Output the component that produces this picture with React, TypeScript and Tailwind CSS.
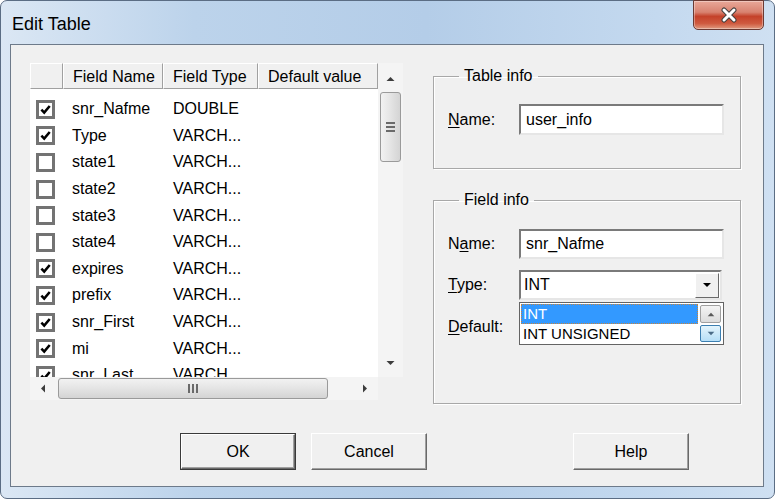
import React from "react";

type Row = { name: string; type: string; on: boolean };

const rows: Row[] = [
  { name: "snr_Nafme", type: "DOUBLE", on: true },
  { name: "Type", type: "VARCH...", on: true },
  { name: "state1", type: "VARCH...", on: false },
  { name: "state2", type: "VARCH...", on: false },
  { name: "state3", type: "VARCH...", on: false },
  { name: "state4", type: "VARCH...", on: false },
  { name: "expires", type: "VARCH...", on: true },
  { name: "prefix", type: "VARCH...", on: true },
  { name: "snr_First", type: "VARCH...", on: true },
  { name: "mi", type: "VARCH...", on: true },
  { name: "snr_Last", type: "VARCH...", on: true },
  { name: "suffix", type: "VARCH...", on: true },
];

type Dir = "up" | "down" | "left" | "right";

function Tri({ dir, className }: { dir: Dir; className?: string }) {
  const pts = { up: "0,5 4,1 8,5", down: "0,1 8,1 4,5", left: "5,0 5,8 1,4", right: "1,0 1,8 5,4" }[dir];
  const vb = dir === "up" || dir === "down" ? "0 0 8 6" : "0 0 6 8";
  return (
    <svg viewBox={vb} className={className}>
      <polygon points={pts} fill="currentColor" />
    </svg>
  );
}

function Check({ on }: { on: boolean }) {
  return (
    <span className="flex h-[19px] w-[19px] items-center justify-center border-[3px] border-[#737373] bg-white">
      {on && (
        <svg viewBox="0 0 12 12" className="h-[11px] w-[11px]">
          <path d="M1.5 6.2 L4.6 9.4 L10.6 2.2" fill="none" stroke="#000" strokeWidth="2.8" />
        </svg>
      )}
    </span>
  );
}

function HeadCell({ w, label }: { w: string; label?: string }) {
  return (
    <div
      className={`${w} flex items-center border-t border-l border-t-white border-l-white border-r border-b border-r-[#a0a0a0] border-b-[#a0a0a0] pl-[9px] pt-px`}
    >
      {label}
    </div>
  );
}

function VScroll() {
  return (
    <div className="flex w-[25px] flex-col bg-[#f4f4f4]">
      <div className="flex h-[29px] items-center justify-center pt-[2px] text-[#3c3c3c]">
        <Tri dir="up" className="h-[6px] w-[9px]" />
      </div>
      <div className="mx-[2px] flex h-[70px] items-center justify-center rounded-[3px] border border-[#9a9a9a] bg-[linear-gradient(90deg,#f2f2f2,#e4e4e4_50%,#d4d4d4)]">
        <div className="flex flex-col gap-[2px]">
          <span className="h-[2px] w-[9px] bg-[#6a6a6a]" />
          <span className="h-[2px] w-[9px] bg-[#6a6a6a]" />
          <span className="h-[2px] w-[9px] bg-[#6a6a6a]" />
        </div>
      </div>
      <div className="flex-1" />
      <div className="flex h-[27px] items-center justify-center pb-[2px] text-[#3c3c3c]">
        <Tri dir="down" className="h-[6px] w-[9px]" />
      </div>
    </div>
  );
}

function HScroll() {
  return (
    <div className="flex w-[348px] items-center bg-[#f4f4f4]">
      <div className="flex w-[26px] items-center justify-center text-[#3c3c3c]">
        <Tri dir="left" className="h-[9px] w-[6px]" />
      </div>
      <div className="ml-[2px] flex h-[21px] w-[270px] items-center justify-center rounded-[3px] border border-[#9a9a9a] bg-[linear-gradient(180deg,#f2f2f2,#e4e4e4_50%,#d4d4d4)]">
        <div className="flex gap-[2px]">
          <span className="h-[9px] w-[2px] bg-[#6a6a6a]" />
          <span className="h-[9px] w-[2px] bg-[#6a6a6a]" />
          <span className="h-[9px] w-[2px] bg-[#6a6a6a]" />
        </div>
      </div>
      <div className="flex-1" />
      <div className="flex w-[26px] items-center justify-center text-[#3c3c3c]">
        <Tri dir="right" className="h-[9px] w-[6px]" />
      </div>
    </div>
  );
}

function FieldList() {
  return (
    <div className="flex h-[337px] w-[373px] flex-col bg-white text-[16px]">
      <div className="flex h-[314px]">
        <div className="flex w-[348px] flex-col">
          <div className="flex h-[26px] shrink-0 bg-[#f0f0f0]">
            <HeadCell w="w-[33px]" />
            <HeadCell w="w-[100px]" label="Field Name" />
            <HeadCell w="w-[95px]" label="Field Type" />
            <HeadCell w="w-[120px]" label="Default value" />
          </div>
          <div className="flex-1 overflow-hidden pt-[7px]">
            {rows.map((r) => (
              <div key={r.name} className="flex h-[26.6px] items-center">
                <div className="w-[33px] pl-[6px]">
                  <Check on={r.on} />
                </div>
                <div className="w-[100px] pl-[9px]">{r.name}</div>
                <div className="w-[95px] pl-[10px]">{r.type}</div>
              </div>
            ))}
          </div>
        </div>
        <VScroll />
      </div>
      <div className="flex h-[23px]">
        <HScroll />
        <div className="flex-1 bg-[#f0f0f0]" />
      </div>
    </div>
  );
}

const sunken =
  "border-2 border-t-[#7a7a7a] border-l-[#7a7a7a] border-r-[#e6e6e6] border-b-[#e6e6e6] bg-white";

function Label({ pre, u, post }: { pre?: string; u: string; post: string }) {
  return (
    <span className="w-[71px] shrink-0">
      {pre}
      <span className="underline underline-offset-2">{u}</span>
      {post}
    </span>
  );
}

function Btn({ label, def }: { label: string; def?: boolean }) {
  return (
    <button
      className={`h-[37px] w-[116px] bg-[#f0f0f0] text-[16px] ${def ? "border border-[#3a3a3a]" : ""}`}
    >
      <span className="flex h-full w-full items-center justify-center border border-t-white border-l-white border-r-[#696969] border-b-[#696969] pt-px shadow-[inset_-1px_-1px_0_#a0a0a0]">
        {label}
      </span>
    </button>
  );
}

export default function App() {
  return (
    <div className="h-[499px] w-[775px] overflow-hidden bg-white font-['Liberation_Sans',Arial,sans-serif] text-black">
      <div className="flex h-full flex-col rounded-[7px] border border-[#5b6d84] bg-[linear-gradient(90deg,#dbe7f4_0%,#bcd3eb_25%,#b4cde8_55%,#c4d9ef_85%,#cfe0f2_100%)]">
        <div className="flex h-[43px] items-start justify-between">
          <span className="pl-[11px] pt-[10px] text-[18px]">Edit Table</span>
          <button className="-mt-px mr-[10px] flex h-[30px] w-[71px] items-center justify-center rounded-b-[5px] border border-[#6b3a33] bg-[linear-gradient(180deg,#e9a899_0%,#d88270_40%,#c4412a_55%,#cf5a3f_80%,#e09a80_100%)] shadow-[inset_0_0_0_1px_rgba(255,255,255,0.35)]">
            <svg viewBox="0 0 20 16" className="h-[16px] w-[20px]">
              <path d="M5 3 L15 13 M15 3 L5 13" stroke="#44403f" strokeWidth="5" strokeLinecap="round" />
              <path d="M5 3 L15 13 M15 3 L5 13" stroke="#fff" strokeWidth="3" strokeLinecap="round" />
            </svg>
          </button>
        </div>

        <div className="ml-[9px] mr-[10px] h-[443px] border border-[#6d7a8a] bg-[#f0f0f0] text-[16px]">
          <div className="flex gap-[30px] pl-[19px] pt-[18px]">
            <FieldList />

            <div className="flex w-[308px] flex-col pt-[3px]">
              <fieldset className="h-[103px] border border-[#a8a8a8] px-[14px] pt-[18px] shadow-[inset_1px_1px_0_#fff,1px_1px_0_#fff]">
                <legend className="ml-[11px] px-[5px] leading-[20px]">Table info</legend>
                <div className="flex items-center">
                  <Label u="N" post="ame:" />
                  <div className={`${sunken} flex h-[31px] w-[205px] items-center pl-[5px]`}>user_info</div>
                </div>
              </fieldset>

              <fieldset className="mt-[21px] h-[214px] border border-[#a8a8a8] px-[14px] pt-[19px] shadow-[inset_1px_1px_0_#fff,1px_1px_0_#fff]">
                <legend className="ml-[11px] px-[5px] leading-[20px]">Field info</legend>
                <div className="flex items-center">
                  <Label pre="N" u="a" post="me:" />
                  <div className={`${sunken} flex h-[30px] w-[205px] items-center pl-[5px]`}>snr_Nafme</div>
                </div>
                <div className="mt-[11px] flex items-center">
                  <Label u="T" post="ype:" />
                  <div className="relative">
                    <div className={`${sunken} flex h-[30px] w-[203px] items-center`}>
                      <span className="flex-1 pl-[3px]">INT</span>
                      <span className="mr-px flex h-[25px] w-[24px] items-center justify-center border border-t-white border-l-white border-r-[#696969] border-b-[#696969] bg-[#f0f0f0]">
                        <Tri dir="down" className="h-[6px] w-[10px]" />
                      </span>
                    </div>
                    <div className="absolute left-0 top-[32px] z-10 flex h-[43px] w-[205px] border border-[#646464] bg-white text-[15px]">
                      <div className="flex flex-1 flex-col pt-px">
                        <div className="ml-px flex h-[20px] items-center bg-[#3399ff] pl-[2px] text-white outline-1 outline-dotted -outline-offset-1 outline-[#c8843c]">
                          INT
                        </div>
                        <div className="flex h-[20px] items-center pl-[3px]">INT UNSIGNED</div>
                      </div>
                      <div className="flex w-[25px] flex-col gap-[2px] p-[2px]">
                        <div className="flex h-[18px] items-center justify-center rounded-[2px] border border-[#a0a0a0] bg-[linear-gradient(180deg,#f4f4f4,#dcdcdc)] text-[#5a5a5a]">
                          <Tri dir="up" className="h-[5px] w-[8px]" />
                        </div>
                        <div className="flex h-[17px] items-center justify-center rounded-[2px] border border-[#3c7fb1] bg-[linear-gradient(180deg,#e3f4fc,#b6dff7)] text-[#4a6b86]">
                          <Tri dir="down" className="h-[5px] w-[8px]" />
                        </div>
                      </div>
                    </div>
                  </div>
                </div>
                <div className="mt-[12px] flex items-center">
                  <Label u="D" post="efault:" />
                  <div className={`${sunken} h-[30px] w-[205px]`} />
                </div>
              </fieldset>
            </div>
          </div>

          <div className="mt-[29px] flex pl-[169px]">
            <Btn label="OK" def />
            <div className="ml-[15px]">
              <Btn label="Cancel" />
            </div>
            <div className="ml-[146px]">
              <Btn label="Help" />
            </div>
          </div>
        </div>
      </div>
    </div>
  );
}
